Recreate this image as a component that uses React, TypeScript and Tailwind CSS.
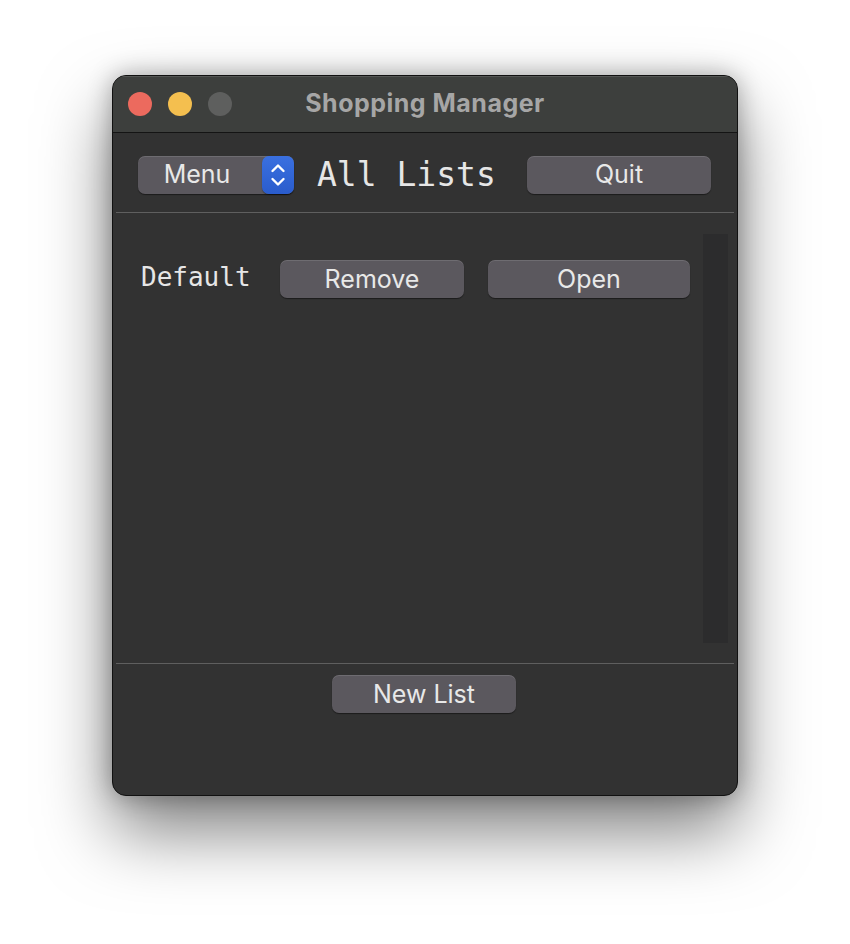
import React from 'react'

const Btn = ({ label, w }: { label: string; w: string }) => (
  <button
    className={`${w} h-[38px] rounded-[7px] bg-[#5b585e] text-[#e8e8e8] text-[25px] leading-none font-[Inter,'Liberation_Sans',sans-serif] shadow-[inset_0_1px_0_rgba(255,255,255,0.12),0_1px_1px_rgba(0,0,0,0.45)] flex items-center justify-center`}
  >
    {label}
  </button>
)

const Stepper = () => (
  <div className="w-[32px] h-[38px] rounded-[7px] bg-gradient-to-b from-[#3a70e0] to-[#2a5ccc] flex items-center justify-center shadow-[0_1px_1px_rgba(0,0,0,0.4)]">
    <svg width="18" height="26" viewBox="0 0 18 26" fill="none" stroke="white" strokeWidth="2.4" strokeLinecap="round" strokeLinejoin="round">
      <path d="M3.5 9 L9 3.5 L14.5 9" />
      <path d="M3.5 17 L9 22.5 L14.5 17" />
    </svg>
  </div>
)

export default function App() {
  return (
    <div className="min-h-[944px] bg-white pt-[75px] pl-[112px]">
      <div className="w-[626px] h-[721px] rounded-[14px] border border-[#111] bg-[#323232] shadow-[0_35px_70px_rgba(0,0,0,0.5),0_0_24px_rgba(0,0,0,0.3)] overflow-hidden flex flex-col">
        {/* title bar */}
        <div className="relative h-[57px] bg-[#3d3f3d] border-b border-[#141414] shadow-[inset_0_1px_0_rgba(255,255,255,0.12)] flex items-center shrink-0">
          <div className="flex items-center gap-[16px] pl-[15px]">
            <div className="w-[24px] h-[24px] rounded-full bg-[#ec6a5e]" />
            <div className="w-[24px] h-[24px] rounded-full bg-[#f4bf4f]" />
            <div className="w-[24px] h-[24px] rounded-full bg-[#5e5f5e]" />
          </div>
          <div className="absolute inset-0 flex items-center justify-center text-[25px] tracking-[0.02em] font-bold text-[#a6a6a6] font-[Inter,'Liberation_Sans',sans-serif] pointer-events-none">
            Shopping Manager
          </div>
        </div>

        {/* toolbar */}
        <div className="h-[79px] flex items-center pl-[25px] pt-[4px] shrink-0">
          <div className="flex items-center w-[156px] h-[38px] rounded-[7px] bg-[#5b585e] shadow-[inset_0_1px_0_rgba(255,255,255,0.12),0_1px_1px_rgba(0,0,0,0.45)]">
            <span className="flex-1 text-center text-[25px] text-[#e8e8e8] font-[Inter,'Liberation_Sans',sans-serif] pr-[6px]">Menu</span>
            <Stepper />
          </div>
          <span className="ml-[23px] w-[210px] text-[33px] text-[#e6e6e6] font-['DejaVu_Sans_Mono',monospace] leading-none">All Lists</span>
          <Btn label="Quit" w="w-[184px]" />
        </div>

        <div className="mx-[3px] h-px bg-[#5f5f5f] shrink-0" />

        {/* list */}
        <div className="flex-1 flex min-h-0">
          <div className="flex-1 pt-[47px] pl-[28px]">
            <div className="flex items-center">
              <span className="w-[139px] text-[26px] text-[#e6e6e6] font-['DejaVu_Sans_Mono',monospace] leading-none -mt-[4px]">Default</span>
              <Btn label="Remove" w="w-[184px]" />
              <div className="w-[24px]" />
              <Btn label="Open" w="w-[202px]" />
            </div>
          </div>
          <div className="w-[25px] mt-[21px] mb-[20px] mr-[9px] bg-[#2c2c2d]" />
        </div>

        <div className="mx-[3px] h-px bg-[#5f5f5f] shrink-0" />

        {/* footer */}
        <div className="h-[131px] shrink-0 flex justify-center pt-[11px] pr-[2px]">
          <Btn label="New List" w="w-[184px]" />
        </div>
      </div>
    </div>
  )
}
